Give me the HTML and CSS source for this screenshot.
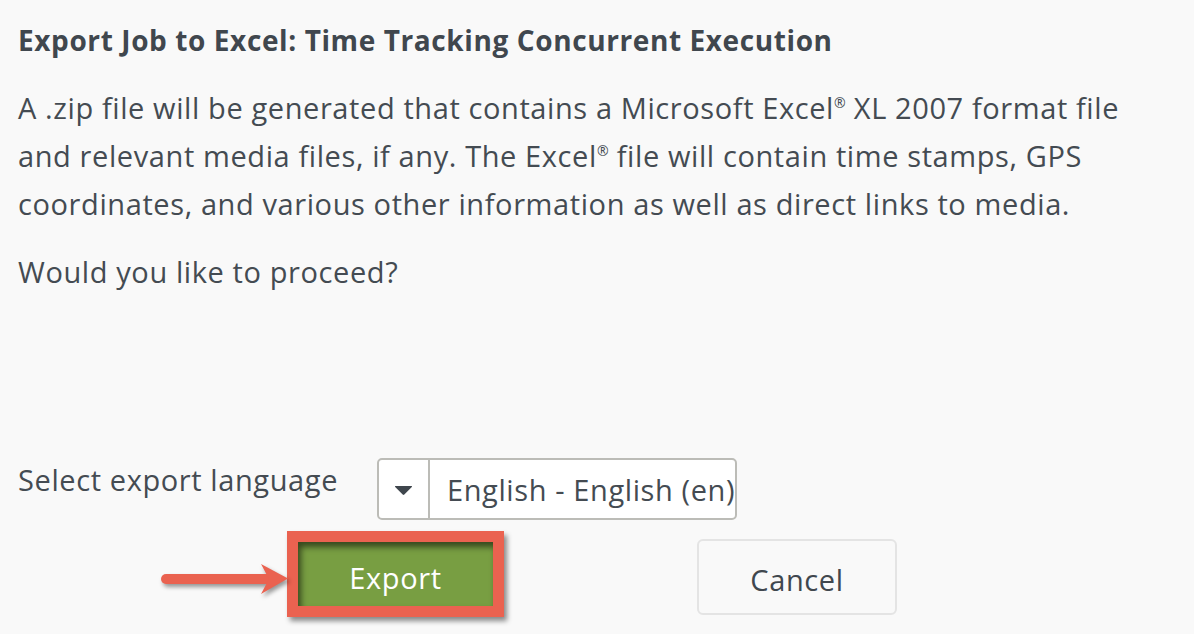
FILE: index.html
```html
<!DOCTYPE html>
<html lang="en">
<head>
<meta charset="utf-8">
<title>Export Job to Excel</title>
<link rel="stylesheet" href="styles.css">
</head>
<body>
<main class="dialog">
  <h1 class="title">Export Job to Excel: Time Tracking Concurrent Execution</h1>
  <p class="text">A .zip file will be generated that contains a Microsoft Excel<sup>®</sup> XL 2007 format file and relevant media files, if any. The Excel<sup>®</sup> file will contain time stamps, GPS coordinates, and various other information as well as direct links to media.</p>
  <p class="text question">Would you like to proceed?</p>

  <div class="lang-row">
    <label class="lang-label">Select export language</label>
    <div class="select">
      <span class="select-caret">
        <svg width="19" height="11" viewBox="0 0 19 11"><path d="M1.5 1 H17.5 Q18.6 1 17.8 1.9 L10.3 9.6 Q9.5 10.4 8.7 9.6 L1.2 1.9 Q0.4 1 1.5 1 Z" fill="#3f464d"/></svg>
      </span>
      <span class="select-value">English - English (en)</span>
    </div>
  </div>

  <div class="actions">
    <div class="export-wrap">
      <svg class="pointer" width="140" height="44" viewBox="0 0 140 44">
        <line x1="10" y1="19" x2="112" y2="19" stroke="#ea6250" stroke-width="10" stroke-linecap="round"/>
        <polygon points="105,4 132,18.5 105,34 113,19" fill="#ea6250"/>
      </svg>
      <button class="btn-export">Export</button>
    </div>
    <button class="btn-cancel">Cancel</button>
  </div>
</main>
</body>
</html>
```
FILE: styles.css
```css
html, body {
  margin: 0;
  padding: 0;
  background: #f9f9f9;
}

body {
  font-family: "Open Sans", "Lato", sans-serif;
  color: #444b52;
  width: 1194px;
  height: 634px;
  overflow: hidden;
}

.dialog {
  padding: 24px 18px 0 18px;
}

.title {
  margin: 0;
  font-size: 28px;
  line-height: 32px;
  font-weight: 700;
  letter-spacing: 0.6px;
  color: #40474e;
}

.text {
  margin: 28px 0 0 0;
  max-width: 1150px;
  font-size: 29px;
  line-height: 48px;
  letter-spacing: 0.6px;
  font-weight: 400;
}

.text sup {
  font-size: 14px;
  vertical-align: 11px;
  line-height: 0;
  letter-spacing: 0;
}

.question {
  margin-top: 20px;
}

.lang-row {
  display: flex;
  align-items: flex-start;
  margin-top: 160px;
}

.lang-label {
  flex: 0 0 359px;
  font-size: 29px;
  line-height: 48px;
  letter-spacing: 0.6px;
}

.select {
  margin-top: 2px;
  width: 356px;
  height: 58px;
  display: flex;
  align-items: stretch;
  background: #ffffff;
  border: 2px solid #bcbcb7;
  border-radius: 5px;
  overflow: hidden;
}

.select-caret {
  flex: 0 0 49px;
  display: flex;
  align-items: center;
  justify-content: center;
  border-right: 2px solid #bcbcb7;
}

.select-caret svg {
  margin-top: 2px;
}

.select-value {
  padding-left: 17px;
  white-space: nowrap;
  overflow: hidden;
  font-size: 29px;
  line-height: 60px;
  letter-spacing: 0.6px;
}

.actions {
  display: flex;
  align-items: flex-start;
  margin-top: 11px;
  padding-left: 269px;
}

.export-wrap {
  position: relative;
  border: 11px solid #ea6250;
  box-shadow: 3px 4px 5px rgba(0, 0, 0, 0.45);
  display: flex;
}

.pointer {
  position: absolute;
  left: -142px;
  top: 18px;
  filter: drop-shadow(2px 3px 2px rgba(0, 0, 0, 0.4));
  overflow: visible;
}

.btn-export {
  width: 195px;
  height: 64px;
  margin: 0;
  border: none;
  background: #789e42;
  color: #ffffff;
  font-family: inherit;
  font-size: 29px;
  letter-spacing: 0.6px;
  padding: 6px 0 0 0;
  box-shadow: inset 3px 5px 6px rgba(0, 0, 0, 0.55);
}

.btn-cancel {
  margin: 8px 0 0 193px;
  width: 200px;
  height: 76px;
  background: #f9f9f9;
  border: 2px solid #e4e4e4;
  border-radius: 6px;
  color: #40474e;
  font-family: inherit;
  font-size: 29px;
  letter-spacing: 0.6px;
  padding: 4px 0 0 0;
}
```
